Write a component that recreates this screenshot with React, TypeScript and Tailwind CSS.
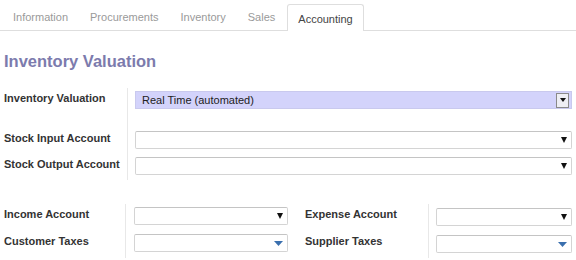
import React from 'react';

const tabs = ['Information', 'Procurements', 'Inventory', 'Sales', 'Accounting'];

const Caret = ({ blue }: { blue?: boolean }) =>
  blue ? (
    <svg width="9" height="5" viewBox="0 0 9 5" className="shrink-0">
      <path d="M0 0 H9 L4.5 5 Z" fill="#3a6fae" />
    </svg>
  ) : (
    <svg width="6" height="6" viewBox="0 0 6 6" className="shrink-0">
      <path d="M0 0 H6 L3 6 Z" fill="#111" />
    </svg>
  );

const Field = ({ blue }: { blue?: boolean }) => (
  <div className="flex h-[18px] w-full items-center justify-end rounded-[2px] border border-[#d4d4d4] border-t-[#c4c4c4] bg-white pr-[4px]">
    <Caret blue={blue} />
  </div>
);

const Label = ({ children }: { children: React.ReactNode }) => (
  <div className="whitespace-nowrap pl-[4px] pt-[3px] text-[11px] leading-[14px] font-bold text-[#333]">{children}</div>
);

const App = () => {
  return (
    <div className="h-[260px] w-[576px] overflow-hidden bg-white font-['Liberation_Sans',Arial,sans-serif]">
      {/* tabs */}
      <div className="flex h-[31px] items-end gap-[2px] border-b border-[#dedede] pl-[3px]">
        {tabs.map((t) => (
          <div
            key={t}
            className={
              t === 'Accounting'
                ? '-mb-px flex h-[27px] items-center rounded-t-[3px] border border-b-0 border-[#dedede] bg-white px-[10px] pt-[2px] text-[11px] text-[#444]'
                : 'flex h-[27px] items-center px-[10px] pt-[2px] text-[11px] text-[#9a9a9a]'
            }
          >
            {t}
          </div>
        ))}
      </div>

      <div className="pl-[4px] pt-[19px] text-[16.5px] leading-[22px] font-bold text-[#7c7bad]">
        Inventory Valuation
      </div>

      {/* top group */}
      <div className="mt-[16px] grid grid-cols-[127px_1fr]">
        <Label>Inventory Valuation</Label>
        <div className="border-l border-[#e8e8e8] pb-[5px] pl-[7px] pr-[4px] pt-[3px]">
          <div className="flex h-[18px] items-center justify-between border border-[#c9c9ee] bg-[#d3d3fb] pl-[6px] pr-[2px] text-[11px] text-[#222]">
            <span>Real Time (automated)</span>
            <div className="flex h-[15px] w-[13px] items-center justify-center border border-[#8a8a8a] bg-[#eeeef4]">
              <svg width="6" height="4" viewBox="0 0 6 4">
                <path d="M0 0 H6 L3 4 Z" fill="#111" />
              </svg>
            </div>
          </div>
        </div>
        <div className="h-[14px]" />
        <div className="h-[14px] border-l border-[#e8e8e8]" />
        <Label>Stock Input Account</Label>
        <div className="border-l border-[#e8e8e8] pb-[5px] pl-[7px] pr-[4px] pt-[3px]">
          <Field />
        </div>
        <Label>Stock Output Account</Label>
        <div className="border-l border-[#e8e8e8] pb-[5px] pl-[7px] pr-[4px] pt-[3px]">
          <Field />
        </div>
      </div>

      {/* bottom group */}
      <div className="mt-[24px] grid grid-cols-[125px_163px_140px_1fr]">
        <Label>Income Account</Label>
        <div className="border-l border-[#e8e8e8] pb-[5px] pl-[8px] pt-[3px]">
          <Field />
        </div>
        <div className="pl-[13px]">
          <Label>Expense Account</Label>
        </div>
        <div className="border-l border-[#e8e8e8] pb-[5px] pl-[7px] pr-[4px] pt-[4px]">
          <Field />
        </div>
        <Label>Customer Taxes</Label>
        <div className="border-l border-[#e8e8e8] pb-[5px] pl-[8px] pt-[3px]">
          <Field blue />
        </div>
        <div className="pl-[13px]">
          <Label>Supplier Taxes</Label>
        </div>
        <div className="border-l border-[#e8e8e8] pb-[5px] pl-[7px] pr-[4px] pt-[4px]">
          <Field blue />
        </div>
      </div>
    </div>
  );
};

export default App;
